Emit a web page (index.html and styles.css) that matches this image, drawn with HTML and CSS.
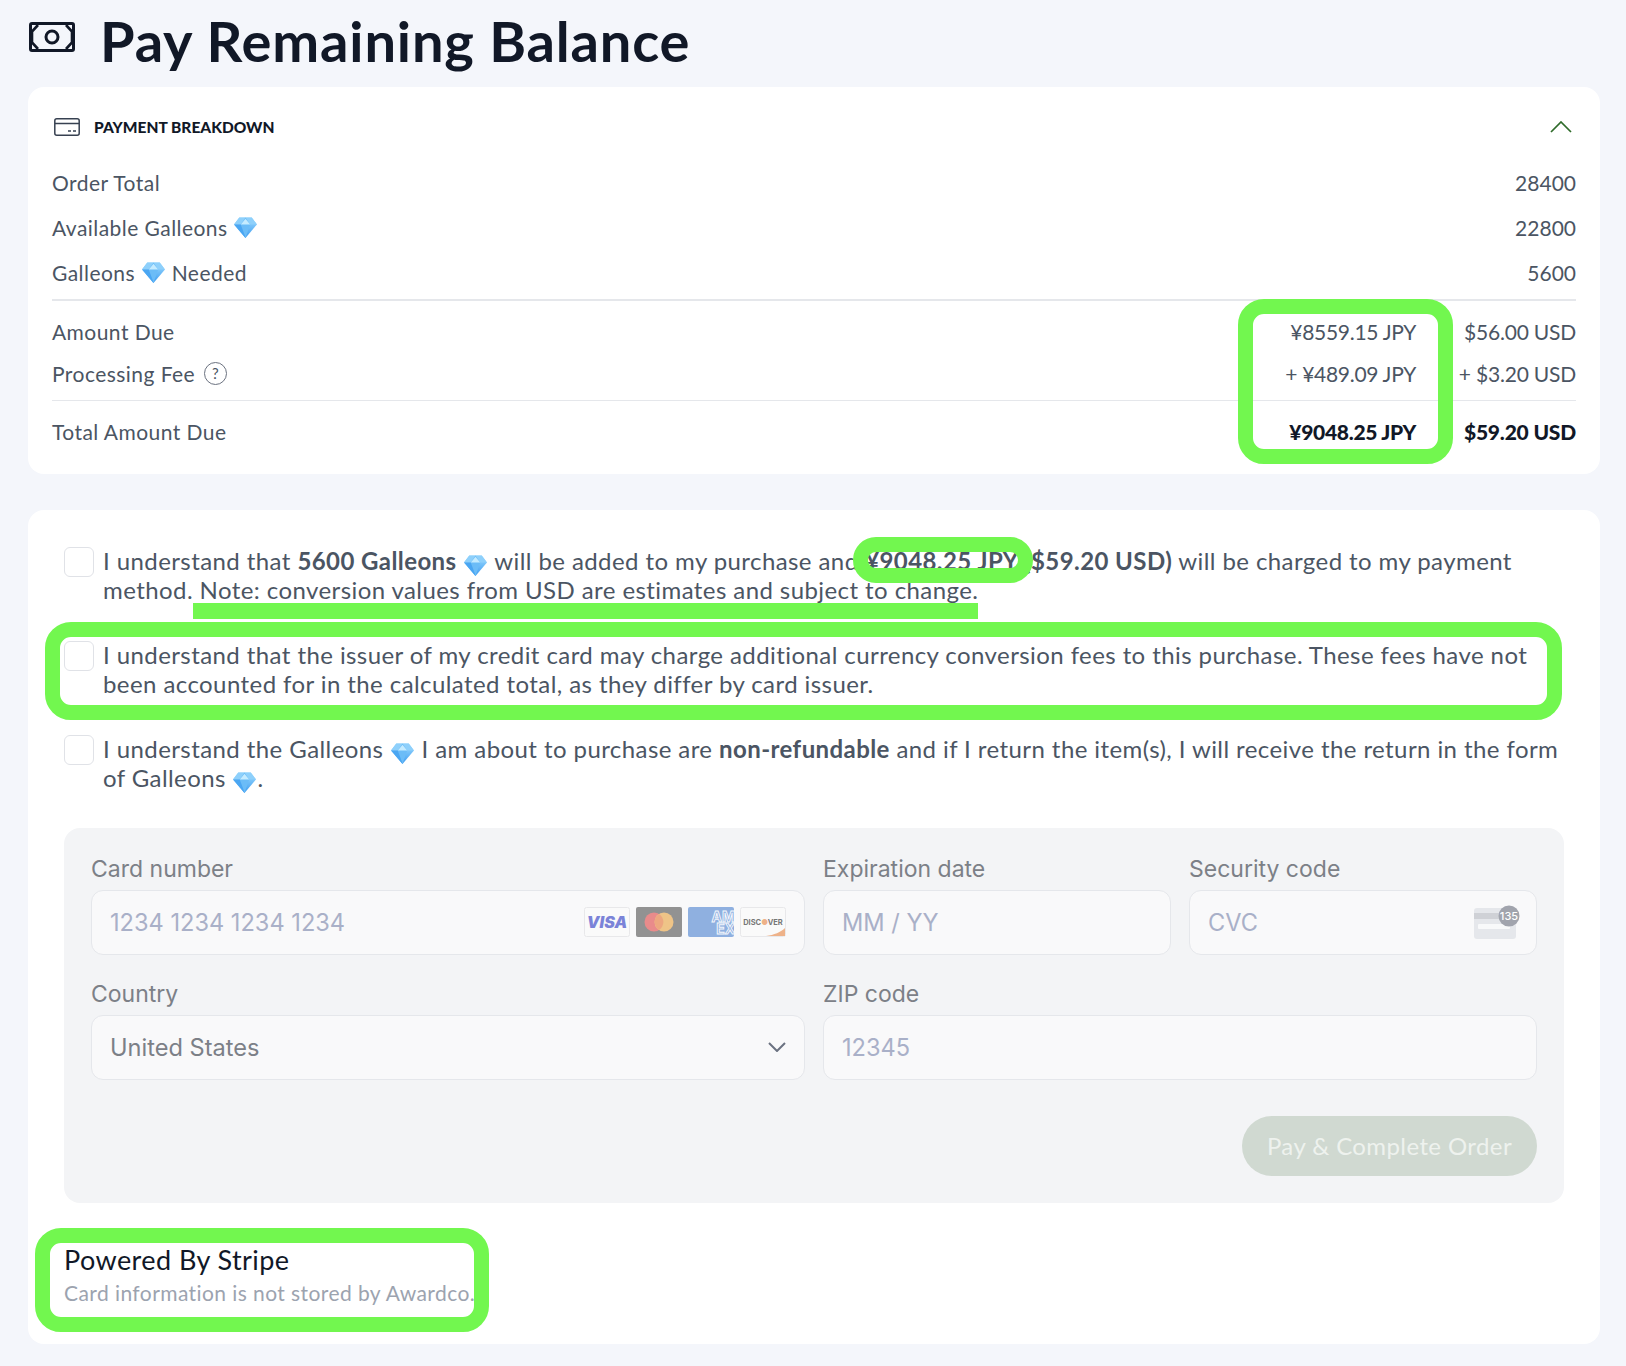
FILE: index.html
```html
<!DOCTYPE html>
<html lang="en">
<head>
<meta charset="utf-8">
<title>Pay Remaining Balance</title>
<link rel="stylesheet" href="styles.css">
</head>
<body>
<svg class="defs" width="0" height="0" aria-hidden="true">
  <defs>
    <linearGradient id="gemg" x1="0" y1="0" x2="0" y2="1"><stop offset="0" stop-color="#9fdcff"/><stop offset="1" stop-color="#3d9cf0"/></linearGradient>
    <symbol id="gem" viewBox="0 0 24 24">
      <path d="M6 2.500h12l5 6.500-11 13L1 9z" fill="url(#gemg)"/>
      <path d="M1 9h22L18 2.500H6z" fill="#8ed0fb"/>
      <path d="M7.500 9 12 2.500 16.500 9 12 22z" fill="#6bbcf7"/>
      <path d="M7.500 9h9L12 3.500z" fill="#c4ebff"/>
      <path d="M1 9h6.500L12 22z" fill="#4aa6f2"/>
    </symbol>
  </defs>
</svg>
<main class="page">
  <header class="title-row">
    <svg class="money-icon" viewBox="0 0 46 30" fill="none" stroke="#111827" stroke-width="3">
      <rect x="1.500" y="1.500" width="43" height="27" rx="1.500"/>
      <circle cx="23" cy="15" r="6"/>
      <path d="M9 3 3 9.500V20.500L9 27M37 3l6 6.500V20.500L37 27" stroke-width="2.600"/>
    </svg>
    <h1 class="title">Pay Remaining Balance</h1>
  </header>

  <section class="card breakdown">
    <div class="bd-head">
      <svg class="card-icon" viewBox="0 0 26 18" fill="none" stroke="#374151" stroke-width="1.500">
        <rect x="0.800" y="0.800" width="24.400" height="16.400" rx="2"/>
        <path d="M1 5.500h24M14 13h3M19 13h3"/>
      </svg>
      <span class="bd-title">PAYMENT BREAKDOWN</span>
      <svg class="chev-up" viewBox="0 0 22 12" fill="none" stroke="#2f6b2a" stroke-width="1.700"><path d="M1 11 11 1l10 10"/></svg>
    </div>
    <div class="row"><span class="lab">Order Total</span><span>28400</span></div>
    <div class="row"><span class="lab">Available Galleons <svg class="gem"><use href="#gem"/></svg></span><span>22800</span></div>
    <div class="row"><span class="lab">Galleons <svg class="gem"><use href="#gem"/></svg> Needed</span><span>5600</span></div>
    <div class="rule rule-thick"></div>
    <div class="row row-money first"><span class="grow lab">Amount Due</span><span class="jpy">¥8559.15 JPY</span><span class="usd">$56.00 USD</span></div>
    <div class="row row-money"><span class="grow lab fee">Processing Fee <span class="help">?</span></span><span class="jpy">+ ¥489.09 JPY</span><span class="usd">+ $3.20 USD</span></div>
    <div class="rule rule-low"></div>
    <div class="row row-money total"><span class="grow lab">Total Amount Due</span><strong class="jpy">¥9048.25 JPY</strong><strong class="usd">$59.20 USD</strong></div>
    <div class="mark mark-jpy"></div>
  </section>

  <section class="card pay">
    <div class="ack"><span class="check"></span><p>I understand that <b>5600 Galleons</b> <svg class="gem"><use href="#gem"/></svg> will be added to my purchase and <b>¥9048.25 JPY ($59.20 USD)</b> will be charged to my payment method. Note: conversion values from USD are estimates and subject to change.</p></div>
    <div class="ack"><span class="check"></span><p>I understand that the issuer of my credit card may charge additional currency conversion fees to this purchase. These fees have not been accounted for in the calculated total, as they differ by card issuer.</p></div>
    <div class="ack"><span class="check"></span><p>I understand the Galleons <svg class="gem"><use href="#gem"/></svg> I am about to purchase are <b>non-refundable</b> and if I return the item(s), I will receive the return in the form of Galleons <svg class="gem"><use href="#gem"/></svg>.</p></div>

    <div class="mark mark-pill"></div>
    <div class="mark mark-line"></div>
    <div class="mark mark-issuer"></div>
    <div class="mark mark-stripe"></div>

    <form class="stripe">
      <div class="fields">
        <label class="field f-num">
          <span class="lbl">Card number</span>
          <span class="input"><span class="ph">1234 1234 1234 1234</span>
            <span class="brands">
              <svg class="brand" viewBox="0 0 46 30"><rect x="0.500" y="0.500" width="45" height="29" rx="2" fill="#fafafa" stroke="#e8e8ea"/><text x="23" y="21" text-anchor="middle" class="visa">VISA</text></svg>
              <svg class="brand" viewBox="0 0 46 30"><rect width="46" height="30" rx="2" fill="#929292"/><circle cx="18" cy="15" r="9.500" fill="#e98b8b"/><circle cx="28" cy="15" r="9.500" fill="#efc487"/><path d="M23 7a9.500 9.500 0 0 1 0 16 9.500 9.500 0 0 1 0-16z" fill="#eda780"/></svg>
              <svg class="brand" viewBox="0 0 46 30"><rect width="46" height="30" rx="2" fill="#8fb0e0"/><text x="47" y="15" text-anchor="end" class="amex">AM</text><text x="47" y="27" text-anchor="end" class="amex">EX</text></svg>
              <svg class="brand" viewBox="0 0 46 30"><rect x="0.500" y="0.500" width="45" height="29" rx="2" fill="#fafafa" stroke="#e8e8ea"/><path d="M26 29c8-1 15-4 19-8v8z" fill="#eeb289"/><text x="23" y="18" text-anchor="middle" class="disc">DISC<tspan fill="#eeb289">●</tspan>VER</text></svg>
            </span>
          </span>
        </label>
        <label class="field">
          <span class="lbl">Expiration date</span>
          <span class="input"><span class="ph">MM / YY</span></span>
        </label>
        <label class="field">
          <span class="lbl">Security code</span>
          <span class="input"><span class="ph">CVC</span>
            <svg class="cvc" viewBox="0 0 46 34"><rect x="0" y="3" width="42" height="31" rx="3" fill="#e5e7eb"/><rect y="8" width="42" height="6" fill="#cfd1d6"/><rect x="4" y="19" width="32" height="5" rx="1" fill="#f8f9fa"/><circle cx="35" cy="11" r="10.500" fill="#a1a4ad"/><text x="35" y="15" text-anchor="middle" class="cvc-n">135</text></svg>
          </span>
        </label>
        <label class="field f-num">
          <span class="lbl">Country</span>
          <span class="input"><span class="val">United States</span>
            <svg class="chev-down" viewBox="0 0 18 10" fill="none" stroke="#6b7280" stroke-width="2"><path d="m1 1 8 8 8-8"/></svg>
          </span>
        </label>
        <label class="field f-zip">
          <span class="lbl">ZIP code</span>
          <span class="input"><span class="ph">12345</span></span>
        </label>
      </div>
      <div class="actions"><button type="button" class="pay-btn">Pay &amp; Complete Order</button></div>
    </form>

    <div class="powered">
      <div class="pw-title">Powered By Stripe</div>
      <div class="pw-sub">Card information is not stored by Awardco.</div>
    </div>
  </section>
</main>
</body>
</html>
```
FILE: styles.css
```css
* { box-sizing: border-box; }
html, body { margin: 0; padding: 0; }
body {
  background: #f4f6fb;
  color: #4b5563;
  font-family: Lato, "Open Sans", sans-serif;
  width: 1626px;
  height: 1366px;
  overflow: hidden;
}
.defs { position: absolute; }
.page { padding: 0 26px 0 28px; }

.title-row { height: 87px; display: flex; align-items: flex-start; }
.money-icon { width: 46px; height: 30px; margin: 22px 0 0 1px; flex: none; }
.title {
  margin: 8px 0 0 25px;
  font-size: 56px;
  line-height: 66px;
  font-weight: 700;
  letter-spacing: 0.85px;
  color: #111827;
}

.card { background: #fff; border-radius: 16px; position: relative; }
.breakdown { height: 387px; padding: 24px 24px 0; margin-bottom: 36px; }
.bd-head { height: 32px; display: flex; align-items: center; margin-bottom: 17px; padding: 0 4px 0 2px; }
.card-icon { width: 26px; height: 18px; margin-right: 14px; flex: none; }
.bd-title { font-size: 15.500px; font-weight: 900; color: #111827; flex: 1; }
.chev-up { width: 22px; height: 12px; }

.row {
  height: 45px;
  display: flex;
  align-items: center;
  justify-content: space-between;
  font-size: 21px;
}
.lab { letter-spacing: 0.45px; }
.gem { width: 25px; height: 25px; vertical-align: -4px; }
.lab .gem { margin-top: -4px; }
.rule { height: 1px; background: #e5e7eb; }
.rule-thick { height: 2px; margin-top: 4px; }
.rule-low { margin-top: 6px; }
.row-money { height: 42px; }
.row-money.first { margin-top: 9px; }
.row-money.total { height: 60px; }
.grow { flex: 1; }
.jpy { width: 240px; text-align: right; letter-spacing: -0.3px; }
.usd { width: 160px; text-align: right; letter-spacing: -0.2px; }
.total strong { color: #111827; font-weight: 900; }
.fee { display: flex; align-items: center; gap: 9px; }
.help {
  width: 23px; height: 23px;
  border: 1.500px solid #6b7280;
  border-radius: 50%;
  font-size: 15px;
  line-height: 20px;
  text-align: center;
}

.pay { height: 834px; padding: 36px 36px 0 36px; }
.ack { display: flex; gap: 9px; height: 58px; margin-bottom: 36px; }
.check {
  width: 30px; height: 30px; flex: none;
  margin-top: 1px;
  background: #fff;
  border: 1px solid #e0e2e7;
  border-radius: 6px;
}
.ack p { margin: 0; font-size: 24px; line-height: 29px; letter-spacing: 0.42px; }
.ack b { font-weight: 700; }
.ack .gem { margin: -4px 0; }

.stripe {
  height: 375px;
  margin-top: 1px;
  background: #f3f4f6;
  border-radius: 16px;
  padding: 27px 27px 0;
  font-family: Inter, Roboto, sans-serif;
}
.fields { display: grid; grid-template-columns: 714px 348px 348px; gap: 18px; row-gap: 25.500px; }
.field { display: flex; flex-direction: column; gap: 6.500px; }
.f-zip { grid-column: span 2; }
.lbl { font-size: 23px; line-height: 28px; color: #7c8087; }
.input {
  height: 65px;
  background: #f9f9fa;
  border: 1px solid #e5e7eb;
  border-radius: 12px;
  padding: 0 18px;
  display: flex;
  align-items: center;
  justify-content: space-between;
  font-size: 23.600px;
}
.ph { color: #a9b0c8; }
.val { color: #7c8087; }
.brands { display: flex; gap: 6px; }
.brand { width: 46px; height: 30px; display: block; }
.visa { font: italic 900 16px Inter, sans-serif; fill: #7b83d8; }
.amex { font: 700 14px Inter, sans-serif; fill: #8fb0e0; stroke: #f4f7fc; stroke-width: 0.900px; }
.disc { font: 700 7.500px Inter, sans-serif; fill: #777; }
.cvc { width: 46px; height: 34px; margin-right: -2px; }
.cvc-n { font: 500 11px Inter, sans-serif; fill: #fff; }
.chev-down { width: 18px; height: 10px; }

.actions { display: flex; justify-content: flex-end; margin-top: 36px; }
.pay-btn {
  width: 295px; height: 60px;
  border: 0;
  border-radius: 30px;
  background: #d0d9d1;
  color: #eef2ee;
  font-family: Lato, sans-serif;
  font-size: 24px;
  letter-spacing: 0.4px;
}

.powered { margin-top: 41px; }
.pw-title { font-size: 27px; line-height: 32px; color: #111827; letter-spacing: 0.43px; }
.pw-sub { font-size: 21px; line-height: 30px; margin-top: 2px; color: #9ca3af; letter-spacing: 0.42px; }

.mark {
  position: absolute;
  border: 15px solid #72f74f;
  border-radius: 26px;
}
.mark-jpy { left: 1210px; top: 212px; width: 215px; height: 165px; }
.mark-pill { left: 825px; top: 27px; width: 180px; height: 46px; border-radius: 23px; }
.mark-line { left: 165px; top: 93px; width: 785px; height: 16px; border: 0; border-radius: 0; background: #72f74f; }
.mark-issuer { left: 17px; top: 112px; width: 1517px; height: 98px; }
.mark-stripe { left: 7px; top: 718px; width: 454px; height: 104px; }
```
